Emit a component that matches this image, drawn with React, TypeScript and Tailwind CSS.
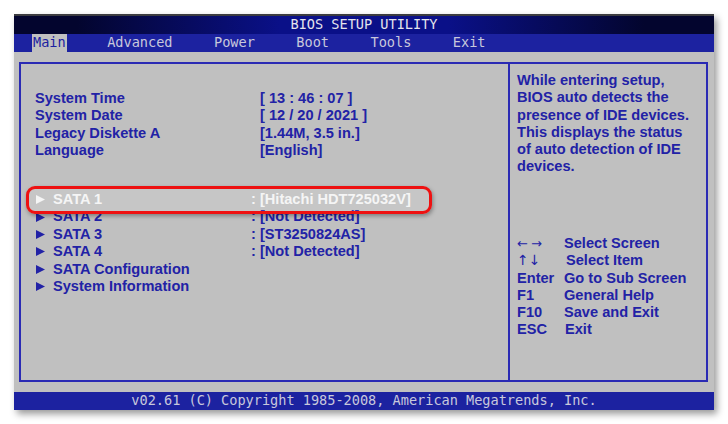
import React from "react";

const Arrow = ({ white }: { white?: boolean }) => (
  <svg width="9" height="9" viewBox="0 0 9 9" className="ml-[1px] shrink-0">
    <polygon points="0,0 9,4.5 0,9" fill={white ? "#f4f4f4" : "#2222a6"} />
  </svg>
);

export default function App() {
  const mono = "font-['DejaVu_Sans_Mono',monospace] text-[13.6px] tracking-[-0.02px]";
  const top = [
    ["System Time", "[ 13 : 46 : 07 ]"],
    ["System Date", "[ 12 / 20 / 2021 ]"],
    ["Legacy Diskette A", "[1.44M, 3.5 in.]"],
    ["Language", "[English]"],
  ];
  const sata: [string, string | null, boolean][] = [
    ["SATA 1", "[Hitachi HDT725032V]", true],
    ["SATA 2", "[Not Detected]", false],
    ["SATA 3", "[ST3250824AS]", false],
    ["SATA 4", "[Not Detected]", false],
    ["SATA Configuration", null, false],
    ["System Information", null, false],
  ];
  const keys: [string, string, string][] = [
    ["←→", "Select Screen", "ml-0"],
    ["↑↓", "Select Item", "ml-[2px]"],
    ["Enter", "Go to Sub Screen", "ml-0"],
    ["F1", "General Help", "ml-0"],
    ["F10", "Save and Exit", "ml-0"],
    ["ESC", "Exit", "ml-[1px]"],
  ];
  return (
    <div className="relative w-[728px] h-[424px] bg-white overflow-hidden">
      <div className="pt-[14px] pl-[14px]">
        <div className="w-[700px] h-[396px] flex flex-col shadow-[3px_4px_7px_rgba(0,0,0,0.4)]">
          <div
            className={`h-[20px] border-t-2 border-[#3c3c40] bg-[linear-gradient(to_right,#03052e_0%,#03052e_9%,#0a1088_38%,#0a1088_62%,#03052e_90%,#03052e_100%)] text-[#e4e4ec] flex items-center justify-center leading-none ${mono}`}
          >
            BIOS SETUP UTILITY
          </div>
          <div className={`h-[18px] bg-[#1c22a0] text-[#c8c8dc] flex items-stretch pl-[18px] gap-[39.5px] leading-none ${mono}`}>
            <div className="px-[1px] bg-[#c0c0c0] text-[#1c22a0] flex items-center">Main</div>
            <div className="px-[1px] flex items-center">Advanced</div>
            <div className="px-[1px] flex items-center">Power</div>
            <div className="px-[1px] flex items-center">Boot</div>
            <div className="px-[1px] flex items-center">Tools</div>
            <div className="px-[1px] flex items-center">Exit</div>
          </div>
          <div className="flex-1 bg-[#c0c0c0] pt-[10px] pb-[10px] pl-[5px] pr-[6px] flex">
            <div className="flex-1 border-2 border-[#2a2ab4] flex font-['Liberation_Sans',Arial,sans-serif] font-bold text-[14.6px] leading-[17.4px] text-[#2222a6]">
              <div className="w-[489px] border-r-2 border-[#2a2ab4] pl-[14px] pt-[26px]">
                {top.map(([l, v]) => (
                  <div key={l} className="flex h-[17.4px] whitespace-nowrap">
                    <div className="w-[225px]">{l}</div>
                    <div>{v}</div>
                  </div>
                ))}
                <div className="h-[31.4px]" />
                {sata.map(([l, v, w]) => (
                  <div key={l} className={`flex h-[17.4px] whitespace-nowrap ${w ? "text-[#f4f4f4]" : ""}`}>
                    <div className="w-[216px] flex items-center">
                      <Arrow white={w} />
                      <span className="ml-[8px]">{l}</span>
                    </div>
                    {v && <div>: {v}</div>}
                  </div>
                ))}
              </div>
              <div className="flex-1 pl-[7px] pt-[8px] leading-[17.3px] whitespace-nowrap">
                <div>While entering setup,</div>
                <div>BIOS auto detects the</div>
                <div>presence of IDE devices.</div>
                <div>This displays the status</div>
                <div>of auto detection of IDE</div>
                <div>devices.</div>
                <div className="mt-[59.5px]">
                  {keys.map(([k, d, m]) => (
                    <div key={k} className="flex h-[17.2px] items-center">
                      <div className="w-[47px]">
                        {k === "←→" ? (
                          <span className="font-normal text-[13px] tracking-[3px] font-['DejaVu_Sans',sans-serif]">←→</span>
                        ) : k === "↑↓" ? (
                          <span className="font-normal text-[14px] font-['DejaVu_Sans',sans-serif]">↑↓</span>
                        ) : (
                          k
                        )}
                      </div>
                      <div className={m}>{d}</div>
                    </div>
                  ))}
                </div>
              </div>
            </div>
          </div>
          <div className={`h-[18px] bg-[#1c22a0] text-[#c8c8dc] flex items-center justify-center leading-none ${mono}`}>
            v02.61 (C) Copyright 1985-2008, American Megatrends, Inc.
          </div>
        </div>
      </div>
      <div className="absolute left-[26px] top-[186px] w-[406px] h-[28px] border-[3px] border-[#ee1111] rounded-[9px] bg-white/10 shadow-[1px_2px_4px_rgba(0,0,0,0.35)]" />
    </div>
  );
}
